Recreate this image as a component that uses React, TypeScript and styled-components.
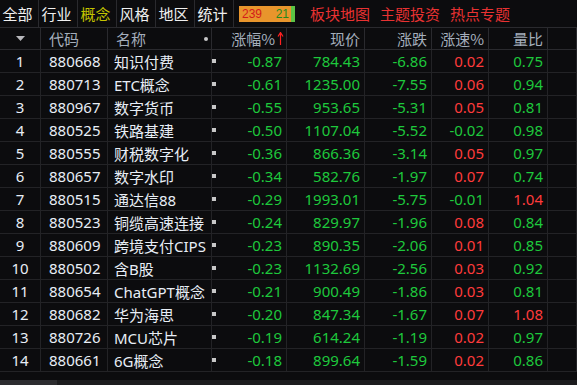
import styled, { createGlobalStyle } from "styled-components"

const GlobalStyle = createGlobalStyle`
    html, body { margin: 0; padding: 0; background: #0c0c0e; }
    body { font-family: "Noto Sans", "Noto Sans CJK SC", sans-serif; }
`

type Row = [string, string, string, string, string, string, string]

const rows: Array<Row> = [
    ['880668', '知识付费', '-0.87', '784.43', '-6.86', '0.02', '0.75'],
    ['880713', 'ETC概念', '-0.61', '1235.00', '-7.55', '0.06', '0.94'],
    ['880967', '数字货币', '-0.55', '953.65', '-5.31', '0.05', '0.81'],
    ['880525', '铁路基建', '-0.50', '1107.04', '-5.52', '-0.02', '0.98'],
    ['880555', '财税数字化', '-0.36', '866.36', '-3.14', '0.05', '0.97'],
    ['880657', '数字水印', '-0.34', '582.76', '-1.97', '0.07', '0.74'],
    ['880515', '通达信88', '-0.29', '1993.01', '-5.75', '-0.01', '1.04'],
    ['880523', '铜缆高速连接', '-0.24', '829.97', '-1.96', '0.08', '0.84'],
    ['880609', '跨境支付CIPS', '-0.23', '890.35', '-2.06', '0.01', '0.85'],
    ['880502', '含B股', '-0.23', '1132.69', '-2.56', '0.03', '0.92'],
    ['880654', 'ChatGPT概念', '-0.21', '900.49', '-1.86', '0.03', '0.81'],
    ['880682', '华为海思', '-0.20', '847.34', '-1.67', '0.07', '1.08'],
    ['880726', 'MCU芯片', '-0.19', '614.24', '-1.19', '0.02', '0.97'],
    ['880661', '6G概念', '-0.18', '899.64', '-1.59', '0.02', '0.86'],
]

const tabs = ['全部', '行业', '概念', '风格', '地区', '统计']
const links = ['板块地图', '主题投资', '热点专题']

const GREEN = '#1ec83c'
const RED = '#ff3b3b'

const pick = (v: string, base = 0) => (parseFloat(v) > base ? RED : GREEN)

export default function App() {
    return (
        <>
            <GlobalStyle />
            <Page>
                <TabBar>
                    {tabs.map((t) => (
                        <Tab key={t} $active={t === '概念'}>{t}</Tab>
                    ))}
                    <Badge>
                        <BadgeUp>239</BadgeUp>
                        <BadgeDown>21</BadgeDown>
                        <BadgeStrip />
                    </Badge>
                    <Links>
                        {links.map((l) => <HotLink key={l}>{l}</HotLink>)}
                    </Links>
                </TabBar>
                <Table>
                    <HeadRow>
                        <HeadCell $align="center">
                            <svg width="9" height="5" viewBox="0 0 9 5"><path d="M0 0H9L4.5 5Z" fill="#b8b8bc" /></svg>
                        </HeadCell>
                        <HeadCell $pad="8px">代码</HeadCell>
                        <HeadCell $pad="8px" $between>
                            名称<Dot />
                        </HeadCell>
                        <HeadCell $align="flex-end" $pad="2px">
                            涨幅%
                            <svg width="7" height="13" viewBox="0 0 7 13" style={{ marginLeft: 2 }}>
                                <path d="M3.5 13V1.5M1 4.5L3.5 0.5L6 4.5" stroke="#ff2020" strokeWidth="1.2" fill="none" />
                            </svg>
                        </HeadCell>
                        <HeadCell $align="flex-end">现价</HeadCell>
                        <HeadCell $align="flex-end">涨跌</HeadCell>
                        <HeadCell $align="flex-end">涨速%</HeadCell>
                        <HeadCell $align="flex-end">量比</HeadCell>
                        <HeadCell />
                    </HeadRow>
                    {rows.map((r, i) => (
                        <BodyRow key={r[0]}>
                            <Cell $align="center">{i + 1}</Cell>
                            <Cell $pad="8px">{r[0]}</Cell>
                            <Cell $pad="6px">{r[1]}</Cell>
                            <Cell $align="flex-end" $color={pick(r[2])} $marker>{r[2]}</Cell>
                            <Cell $align="flex-end" $color={GREEN}>{r[3]}</Cell>
                            <Cell $align="flex-end" $color={pick(r[4])}>{r[4]}</Cell>
                            <Cell $align="flex-end" $color={pick(r[5])}>{r[5]}</Cell>
                            <Cell $align="flex-end" $color={pick(r[6], 1)}>{r[6]}</Cell>
                            <Cell />
                        </BodyRow>
                    ))}
                </Table>
                <Scrollbar>
                    <Thumb />
                </Scrollbar>
            </Page>
        </>
    )
}

const Page = styled.div`
    width: 577px;
    height: 385px;
    display: flex;
    flex-direction: column;
    background: #0c0c0e;
    overflow: hidden;
`
const TabBar = styled.div`
    display: flex;
    align-items: center;
    height: 28px;
    box-sizing: border-box;
    border-bottom: 1px solid #2a2a2e;
    flex-shrink: 0;
`
const Tab = styled.div<{ $active?: boolean }>`
    width: 39px;
    height: 100%;
    box-sizing: border-box;
    border-right: 1px solid #2a2a2e;
    display: flex;
    align-items: center;
    justify-content: center;
    font-family: "Noto Sans CJK SC", sans-serif;
    font-size: 15px;
    color: ${({ $active }) => ($active ? '#c4c400' : '#f0f0f0')};
    padding-right: 3px;
`
const Badge = styled.div`
    margin-left: 5px;
    width: 56px;
    height: 16px;
    background: #e8952c;
    display: flex;
    align-items: center;
    position: relative;
    font-family: "Liberation Sans", sans-serif;
    font-size: 12px;
`
const BadgeUp = styled.span`
    color: #d41a1a;
    margin-left: 3px;
`
const BadgeDown = styled.span`
    color: #1f8a1f;
    margin-left: auto;
    margin-right: 6px;
`
const BadgeStrip = styled.div`
    position: absolute;
    right: 0;
    top: 0;
    width: 4px;
    height: 100%;
    background: #5cc444;
`
const Links = styled.div`
    display: flex;
    gap: 10px;
    margin-left: 15px;
`
const HotLink = styled.span`
    font-family: "Noto Sans CJK SC", sans-serif;
    font-size: 15px;
    color: #e83232;
`
const Table = styled.div`
    flex: 1;
    display: flex;
    flex-direction: column;
`
const columns = '41px 67px 104px 75px 78px 67px 57px 59px 1fr'

const HeadRow = styled.div`
    display: grid;
    grid-template-columns: ${columns};
    height: 22px;
    box-sizing: border-box;
    border-bottom: 1px solid #2a2a2e;
`
const BodyRow = styled.div`
    display: grid;
    grid-template-columns: ${columns};
    height: 23px;
    box-sizing: border-box;
    border-bottom: 1px solid #232326;
`
const HeadCell = styled.div<{ $align?: string; $pad?: string; $between?: boolean }>`
    display: flex;
    align-items: center;
    justify-content: ${({ $align, $between }) => ($between ? 'space-between' : $align || 'flex-start')};
    padding: ${({ $align, $pad }) => ($align === 'flex-end' ? `0 ${$pad || '4px'} 0 0` : `0 0 0 ${$pad || '0'}`)};
    border-right: 1px solid #2a2a2e;
    box-sizing: border-box;
    font-family: "Noto Sans CJK SC", sans-serif;
    font-size: 15px;
    color: #a4aebb;
    white-space: nowrap;
`
const Dot = styled.span`
    width: 4px;
    height: 4px;
    border-radius: 50%;
    background: #c8c8c8;
    margin-right: 3px;
`
const Cell = styled.div<{ $align?: string; $pad?: string; $color?: string; $marker?: boolean }>`
    position: relative;
    display: flex;
    align-items: center;
    justify-content: ${({ $align }) => $align || 'flex-start'};
    padding: ${({ $align, $pad }) => ($align === 'flex-end' ? '0 4px 0 0' : `0 0 0 ${$pad || '0'}`)};
    border-right: 1px solid #232326;
    box-sizing: border-box;
    font-size: 15px;
    color: ${({ $color }) => $color || '#e8eef6'};
    white-space: nowrap;
    overflow: hidden;

    ${({ $marker }) => $marker && `
        &::before {
            content: '';
            position: absolute;
            left: 0;
            top: 9px;
            width: 4px;
            height: 4px;
            background: #c8c8c8;
        }
    `}
`
const Scrollbar = styled.div`
    height: 5px;
    background: #1c1c1e;
    flex-shrink: 0;
`
const Thumb = styled.div`
    width: 57px;
    height: 100%;
    background: #2c2c2f;
`
